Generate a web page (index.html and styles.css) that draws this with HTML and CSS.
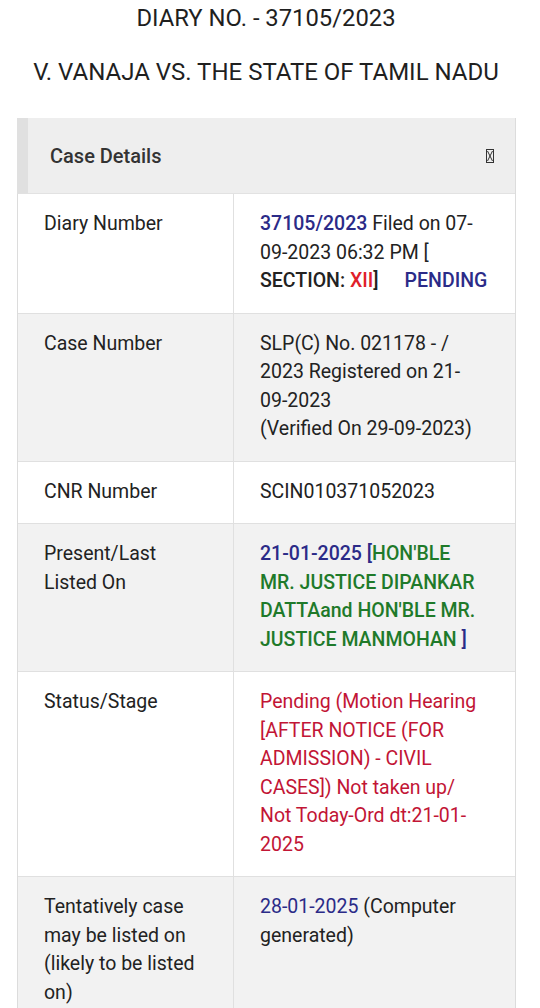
FILE: index.html
```html
<!DOCTYPE html>
<html>
<head>
<meta charset="utf-8">
<link rel="stylesheet" href="styles.css">
</head>
<body>
<h1 class="title">DIARY NO. - 37105/2023</h1>
<h2 class="parties">V. VANAJA VS. THE STATE OF TAMIL NADU</h2>
<div class="card">
  <div class="card-head">
    <span class="head-text">Case Details</span>
    <svg class="tofu" width="8" height="14" viewBox="0 0 8 14"><rect x="0.5" y="0.5" width="7" height="13" fill="none" stroke="#333" stroke-width="1"/><path d="M1.5 2 L6.5 12 M6.5 2 L1.5 12" stroke="#333" stroke-width="1"/></svg>
  </div>
  <div class="row">
    <div class="cell label">Diary Number</div>
    <div class="cell value"><span class="blue b">37105/2023</span> Filed on 07-<br>09-2023 06:32 PM [<br><span class="b">SECTION: <span class="red">XII</span>]</span><span class="pending blue b">PENDING</span></div>
  </div>
  <div class="row alt">
    <div class="cell label">Case Number</div>
    <div class="cell value">SLP(C) No. 021178 - /<br>2023 Registered on 21-<br>09-2023<br>(Verified On 29-09-2023)</div>
  </div>
  <div class="row">
    <div class="cell label">CNR Number</div>
    <div class="cell value">SCIN010371052023</div>
  </div>
  <div class="row alt">
    <div class="cell label">Present/Last<br>Listed On</div>
    <div class="cell value b"><span class="blue">21-01-2025 [</span><span class="green">HON'BLE<br>MR. JUSTICE DIPANKAR<br>DATTAand HON'BLE MR.<br>JUSTICE MANMOHAN </span><span class="blue">]</span></div>
  </div>
  <div class="row">
    <div class="cell label">Status/Stage</div>
    <div class="cell value crimson">Pending (Motion Hearing<br>[AFTER NOTICE (FOR<br>ADMISSION) - CIVIL<br>CASES]) Not taken up/<br>Not Today-Ord dt:21-01-<br>2025</div>
  </div>
  <div class="row alt">
    <div class="cell label">Tentatively case<br>may be listed on<br>(likely to be listed<br>on)</div>
    <div class="cell value"><span class="blue">28-01-2025</span> (Computer<br>generated)</div>
  </div>
</div>
</body>
</html>
```
FILE: styles.css
```css
html, body {
  margin: 0;
  padding: 0;
  background: #ffffff;
  font-family: Roboto, "Liberation Sans", sans-serif;
  color: #222222;
}
.title {
  margin: 4px 0 0 0;
  font-size: 23.8px;
  font-weight: 400;
  text-align: center;
  line-height: 28px;
  padding-right: 8px;
  color: #1f1f1f;
}
.parties {
  margin: 26px 0 0 0;
  font-size: 24px;
  font-weight: 400;
  text-align: center;
  line-height: 28px;
  padding-right: 8px;
  color: #1f1f1f;
}
.card {
  margin: 32px 0 0 17px;
  width: 499px;
  border: 1px solid #dcdcdc;
  border-top: none;
  box-sizing: border-box;
}
.card-head {
  height: 75px;
  background: #eeeeee;
  border-left: 11px solid #e0e0e0;
  margin-left: -1px;
  display: flex;
  align-items: center;
  justify-content: space-between;
  padding: 0 21px 0 22px;
  border-bottom: 1px solid #e2e2e2;
}
.head-text {
  font-size: 20px;
  font-weight: 500;
  color: #333333;
}
.tofu { display: block; }
.row {
  display: grid;
  grid-template-columns: 216px 1fr;
  border-bottom: 1px solid #e0e0e0;
  background: #ffffff;
}
.row.alt { background: #f2f2f2; }
.cell {
  padding: 16px 6px 17px 26px;
  font-size: 19.5px;
  line-height: 28.5px;
}
.label { border-right: 1px solid #e0e0e0; color: #222222; }
.value { color: #222222; }
.b { font-weight: 500; }
.blue { color: #2b2b88; }
.red { color: #e0202a; }
.green { color: #1f7a2a; }
.crimson { color: #c21535; }
.pending { margin-left: 26px; }
```
